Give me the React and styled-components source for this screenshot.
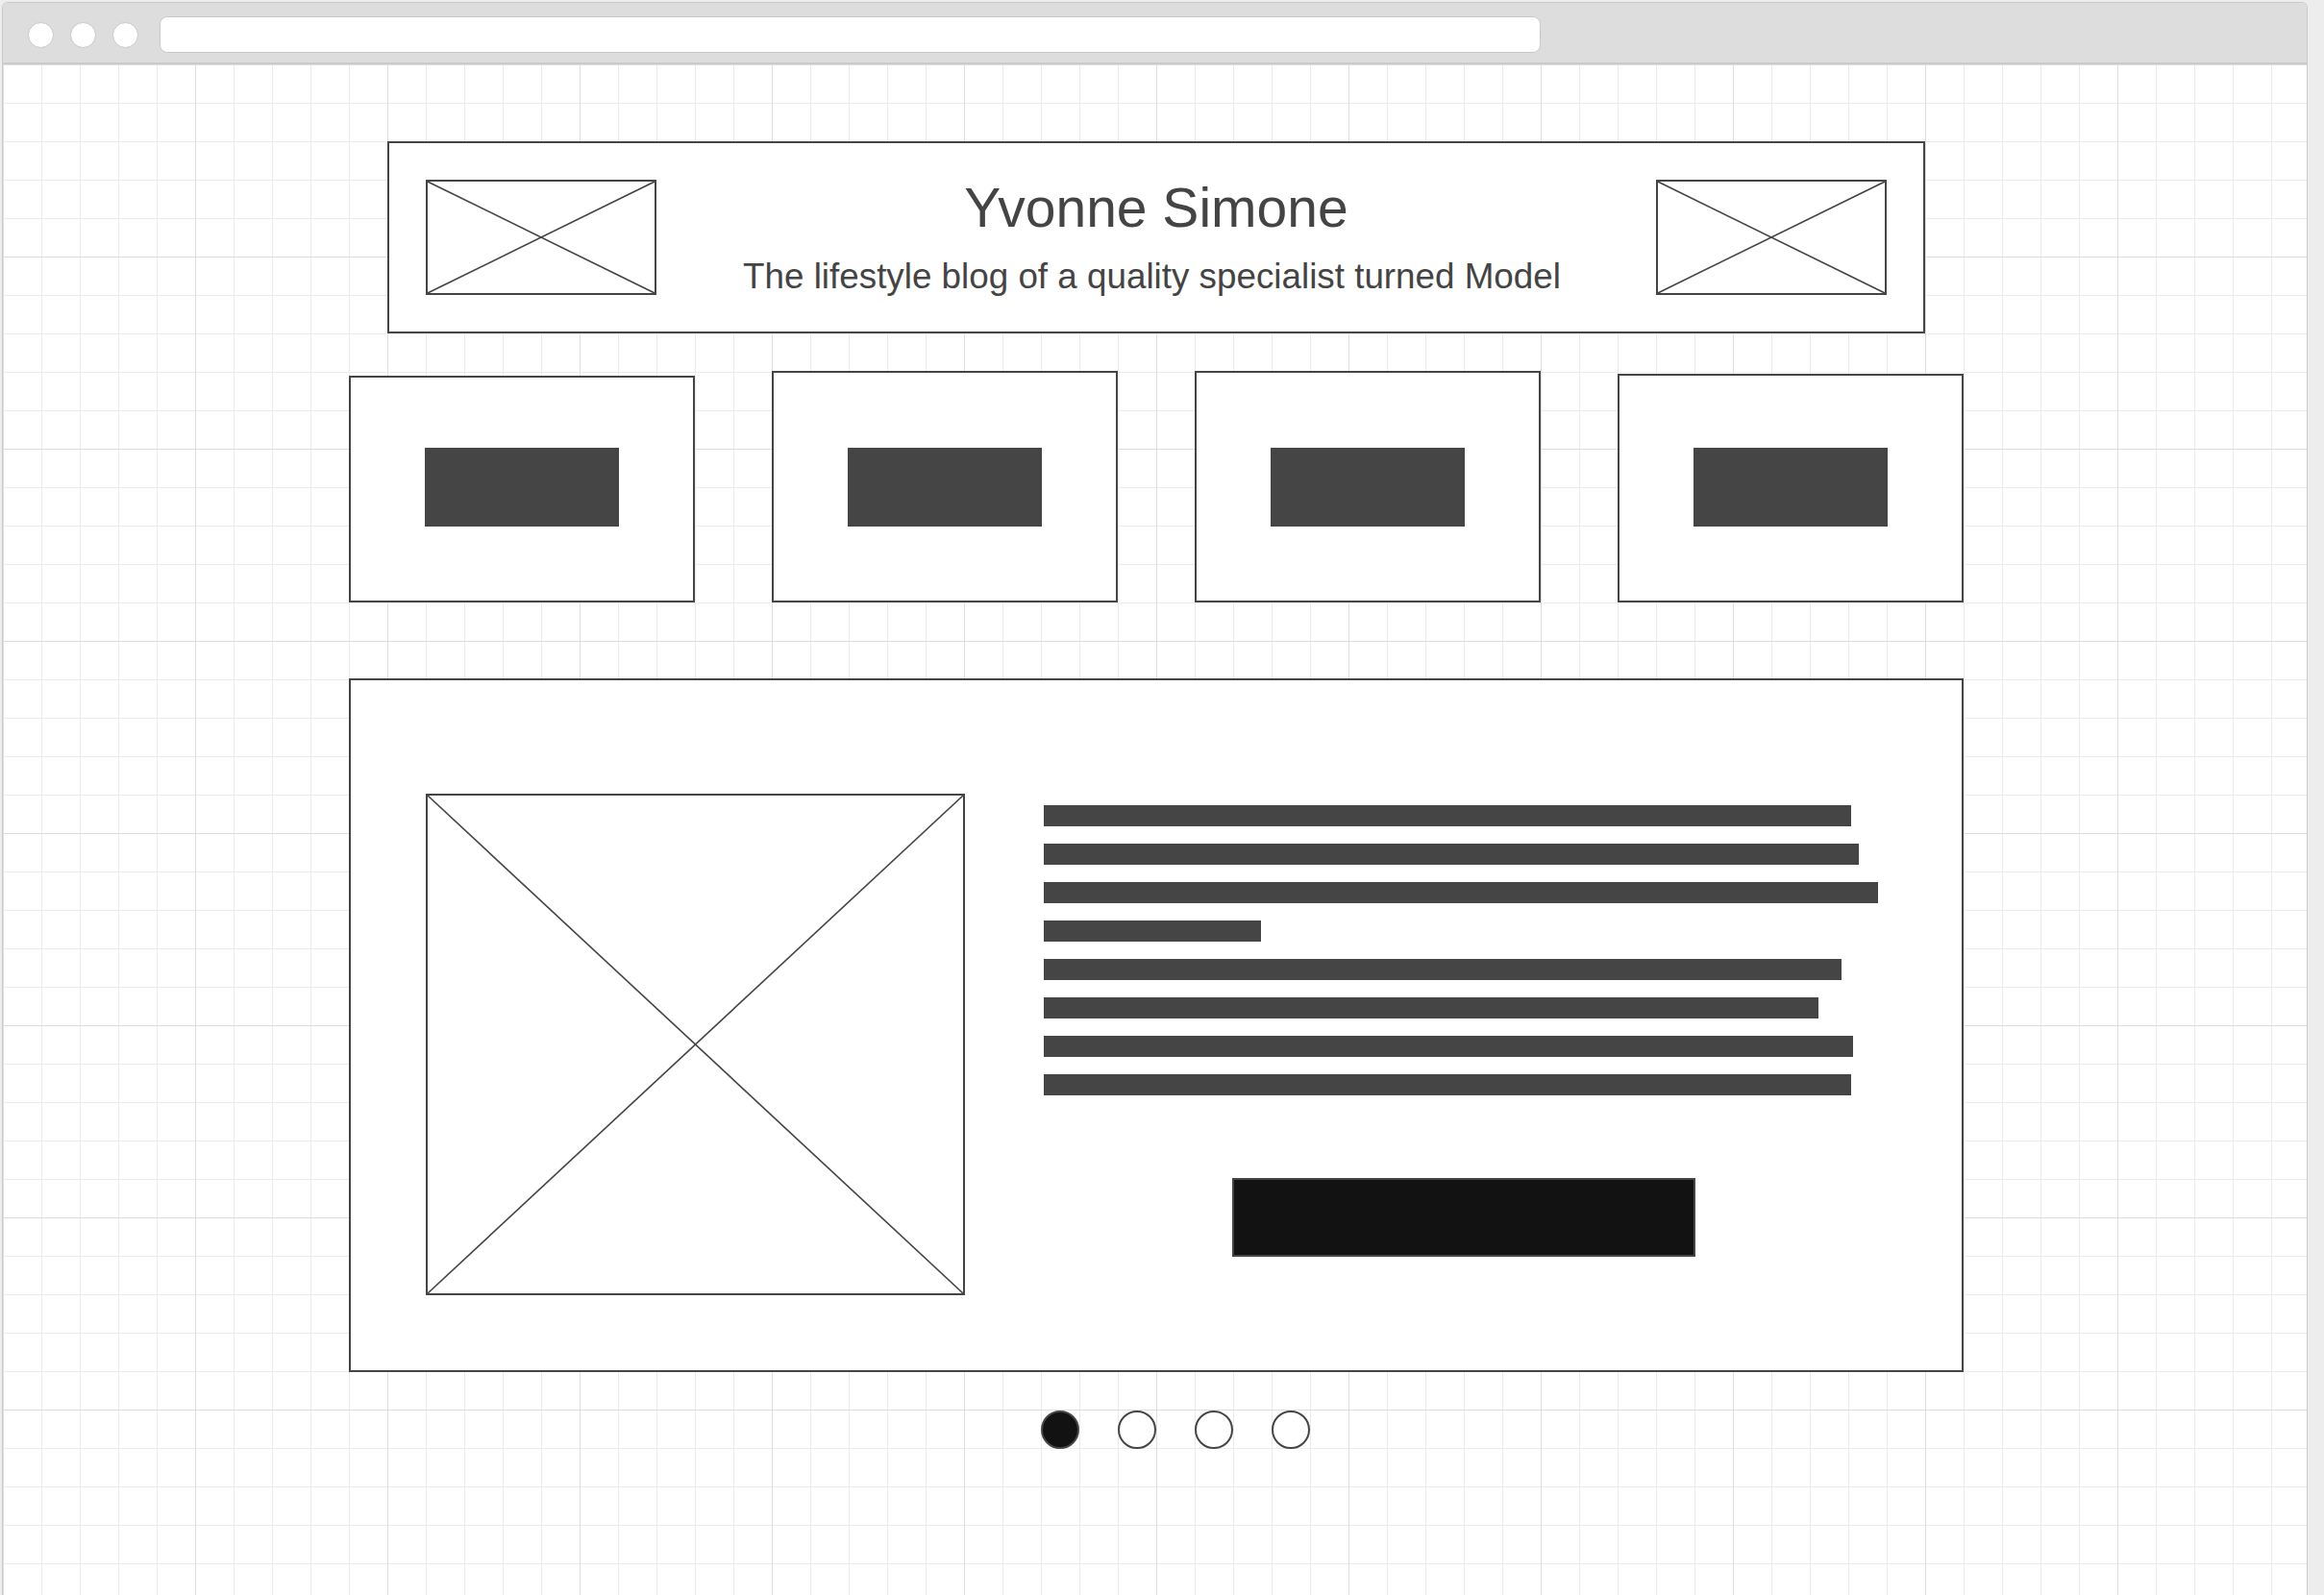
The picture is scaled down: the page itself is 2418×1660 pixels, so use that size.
import React from 'react';
import styled, { createGlobalStyle } from 'styled-components';

// wireframe of a blog landing page inside a browser window

const GlobalStyle = createGlobalStyle`
  html, body {
    margin: 0;
    padding: 0;
    background: #ededed;
    overflow: hidden;
  }
  body {
    font-family: "Liberation Sans", Arial, sans-serif;
    color: #444;
  }
  * { box-sizing: border-box; }
`;

const Window = styled.div`
  margin: 2px 0 0 2px;
  width: 2399px;
  height: 1700px;
  border: 1px solid #cacaca;
  border-bottom: none;
  border-radius: 6px 6px 0 0;
  overflow: hidden;
  display: flex;
  flex-direction: column;
`;

const TitleBar = styled.div`
  height: 64px;
  flex-shrink: 0;
  background: #dddddd;
  border-bottom: 2px solid #cacaca;
  display: flex;
  align-items: flex-start;
  padding: 14px 0 0 26px;
`;

const Light = styled.span`
  width: 27px;
  height: 27px;
  margin-top: 6px;
  margin-right: 17px;
  border-radius: 50%;
  background: #fff;
  border: 1px solid #c8c8c8;
`;

const AddressBar = styled.div`
  margin-left: 5px;
  width: 1437px;
  height: 38px;
  background: #fff;
  border: 1px solid #c8c8c8;
  border-radius: 8px;
`;

const Canvas = styled.div`
  flex: 1;
  background-color: #fff;
  background-image:
    linear-gradient(to right, #dedede 1px, transparent 1px),
    linear-gradient(to bottom, #dedede 1px, transparent 1px),
    linear-gradient(to right, #ebebeb 1px, transparent 1px),
    linear-gradient(to bottom, #ebebeb 1px, transparent 1px);
  background-size: 200px 200px, 200px 200px, 40px 40px, 40px 40px;
  padding: 80px 0 0 360px;
`;

const Column = styled.div`
  width: 1680px;
  display: flex;
  flex-direction: column;
  align-items: center;
`;

const Header = styled.header`
  width: 1600px;
  height: 200px;
  background: #fff;
  border: 2px solid #454545;
  display: flex;
  align-items: center;
  padding: 0 38px;
`;

const Titles = styled.div`
  flex: 1;
  align-self: stretch;
  padding-top: 35px;
  display: flex;
  flex-direction: column;
  align-items: center;
`;

const Title = styled.h1`
  margin: 0 0 20px;
  font-weight: 400;
  font-size: 57px;
  line-height: 64px;
  color: #444;
`;

const Subtitle = styled.p`
  margin: 0;
  padding-right: 9px;
  font-size: 36.8px;
  line-height: 40px;
  color: #444;
`;

const Frame = styled.div`
  width: ${(p) => p.$w}px;
  height: ${(p) => p.$h}px;
  flex-shrink: 0;
  border: 2px solid #454545;
  background: #fff;
  svg { display: block; width: 100%; height: 100%; }
`;

const CrossBox = ({ w, h }) => (
  <Frame $w={w} $h={h}>
    <svg viewBox="0 0 100 100" preserveAspectRatio="none">
      <line x1="0" y1="0" x2="100" y2="100" stroke="#454545" strokeWidth="1.6" vectorEffect="non-scaling-stroke" />
      <line x1="100" y1="0" x2="0" y2="100" stroke="#454545" strokeWidth="1.6" vectorEffect="non-scaling-stroke" />
    </svg>
  </Frame>
);

const CardRow = styled.div`
  width: 100%;
  margin-top: 39px;
  display: flex;
  align-items: flex-end;
  gap: 80px;
`;

const Card = styled.div`
  width: 360px;
  height: ${(p) => p.$h}px;
  background: #fff;
  border: 2px solid #454545;
  display: flex;
  flex-direction: column;
  justify-content: flex-end;
  align-items: center;
  padding-bottom: 77px;
`;

const CardLabel = styled.div`
  width: 202px;
  height: 82px;
  background: #454545;
`;

const Panel = styled.section`
  width: 100%;
  height: 722px;
  margin-top: 79px;
  background: #fff;
  border: 2px solid #454545;
  display: flex;
  gap: 82px;
  padding: 118px 81px 78px 78px;
`;

const TextCol = styled.div`
  flex: 1;
  padding-top: 12px;
  display: flex;
  flex-direction: column;
`;

const Bar = styled.div`
  width: ${(p) => p.$w}px;
  height: 22px;
  background: #454545;
  margin-bottom: 18px;
`;

const Button = styled.button`
  align-self: center;
  margin-top: 68px;
  width: 482px;
  height: 82px;
  background: #121212;
  border: 2px solid #454545;
  padding: 0;
`;

const Dots = styled.div`
  width: 100%;
  display: flex;
  gap: 40px;
  margin-top: 40px;
  padding-left: 720px;
`;

const Dot = styled.span`
  width: 40px;
  height: 40px;
  border-radius: 50%;
  border: 2px solid #454545;
  background: ${(p) => (p.$active ? '#121212' : '#fff')};
`;

const cardHeights = [236, 241, 241, 238];
const barWidths = [840, 848, 868, 226, 830, 806, 842, 840];

export default function App() {
  return (
    <>
      <GlobalStyle />
      <Window>
        <TitleBar>
          <Light />
          <Light />
          <Light />
          <AddressBar />
        </TitleBar>
        <Canvas>
          <Column>
            <Header>
              <CrossBox w={240} h={120} />
              <Titles>
                <Title>Yvonne Simone</Title>
                <Subtitle>The lifestyle blog of a quality specialist turned Model</Subtitle>
              </Titles>
              <CrossBox w={240} h={120} />
            </Header>

            <CardRow>
              {cardHeights.map((h, i) => (
                <Card key={i} $h={h}>
                  <CardLabel />
                </Card>
              ))}
            </CardRow>

            <Panel>
              <CrossBox w={561} h={522} />
              <TextCol>
                {barWidths.map((w, i) => (
                  <Bar key={i} $w={w} />
                ))}
                <Button />
              </TextCol>
            </Panel>

            <Dots>
              <Dot $active />
              <Dot />
              <Dot />
              <Dot />
            </Dots>
          </Column>
        </Canvas>
      </Window>
    </>
  );
}
